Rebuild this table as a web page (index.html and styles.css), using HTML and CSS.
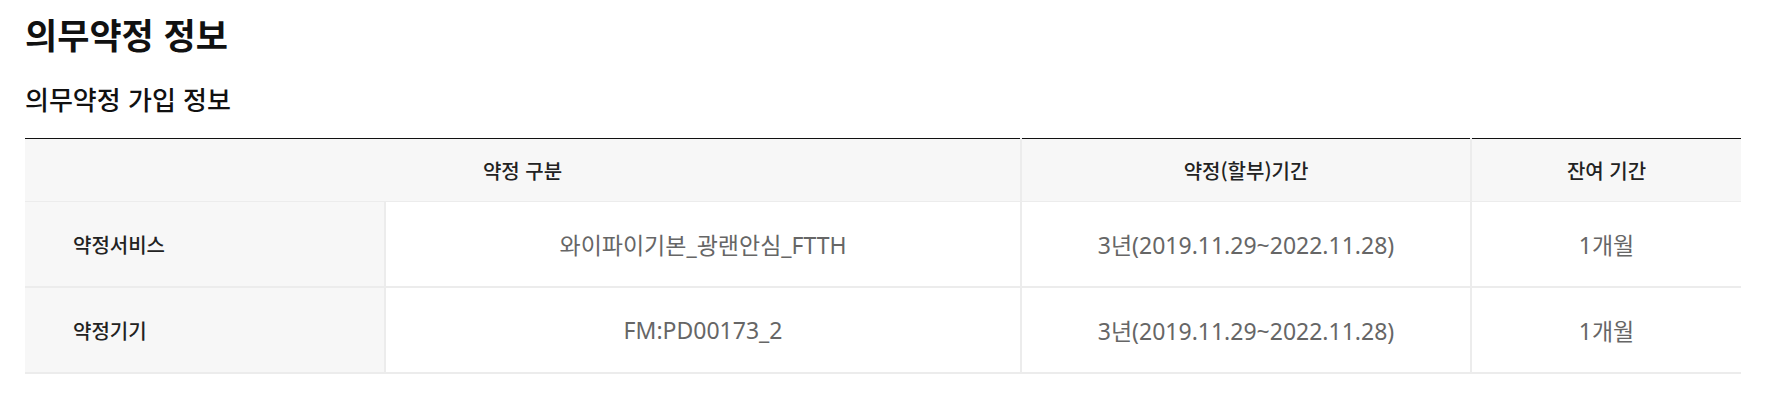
FILE: index.html
```html
<!DOCTYPE html>
<html lang="ko">
<head>
<meta charset="utf-8">
<title>의무약정 정보</title>
<link rel="stylesheet" href="styles.css">
</head>
<body>
<div class="page">
  <h1 class="title">의무약정 정보</h1>
  <h2 class="subtitle">의무약정 가입 정보</h2>
  <table class="info-table">
    <colgroup>
      <col class="c-label">
      <col class="c-name">
      <col class="c-period">
      <col class="c-remain">
    </colgroup>
    <thead>
      <tr>
        <th colspan="2">약정 구분</th>
        <th>약정(할부)기간</th>
        <th>잔여 기간</th>
      </tr>
    </thead>
    <tbody>
      <tr>
        <th class="row-label">약정서비스</th>
        <td>와이파이기본_광랜안심_FTTH</td>
        <td>3년(2019.11.29~2022.11.28)</td>
        <td>1개월</td>
      </tr>
      <tr>
        <th class="row-label">약정기기</th>
        <td>FM:PD00173_2</td>
        <td>3년(2019.11.29~2022.11.28)</td>
        <td>1개월</td>
      </tr>
    </tbody>
  </table>
</div>
</body>
</html>
```
FILE: styles.css
```css
html, body {
  margin: 0;
  padding: 0;
  background: #ffffff;
}
body {
  font-family: "Noto Sans CJK KR", "Noto Sans", sans-serif;
  color: #111;
}
.page {
  padding: 12px 0 0 25px;
  width: 1716px;
}
.title {
  margin: 0;
  font-size: 35px;
  line-height: 44px;
  font-weight: 700;
  color: #111;
}
.subtitle {
  margin: 26px 0 0;
  font-size: 26px;
  line-height: 34px;
  font-weight: 500;
  color: #111;
}
.info-table {
  margin-top: 22px;
  width: 1716px;
  border-collapse: collapse;
  table-layout: fixed;
  border-top: 1px solid #111;
}
.c-label { width: 360px; }
.c-name { width: 636px; }
.c-period { width: 450px; }
.c-remain { width: 270px; }
.info-table thead th {
  height: 62px;
  padding: 0;
  background: #f7f7f7;
  font-size: 20px;
  font-weight: 500;
  color: #222;
  text-align: center;
  border-left: 2px solid #ececec;
  border-bottom: 1px solid #ececec;
}
.info-table thead th:first-child { border-left: none; }
.info-table tbody th,
.info-table tbody td {
  height: 84px;
  padding: 0;
  border-bottom: 2px solid #ececec;
}
.info-table tbody td {
  border-left: 2px solid #ececec;
  text-align: center;
  font-family: "Noto Sans", "Noto Sans CJK KR", sans-serif;
  font-size: 23px;
  font-weight: 400;
  color: #666;
}
.info-table .row-label {
  background: #f7f7f7;
  text-align: left;
  padding-left: 48px;
  font-size: 20px;
  font-weight: 500;
  color: #222;
}
```
